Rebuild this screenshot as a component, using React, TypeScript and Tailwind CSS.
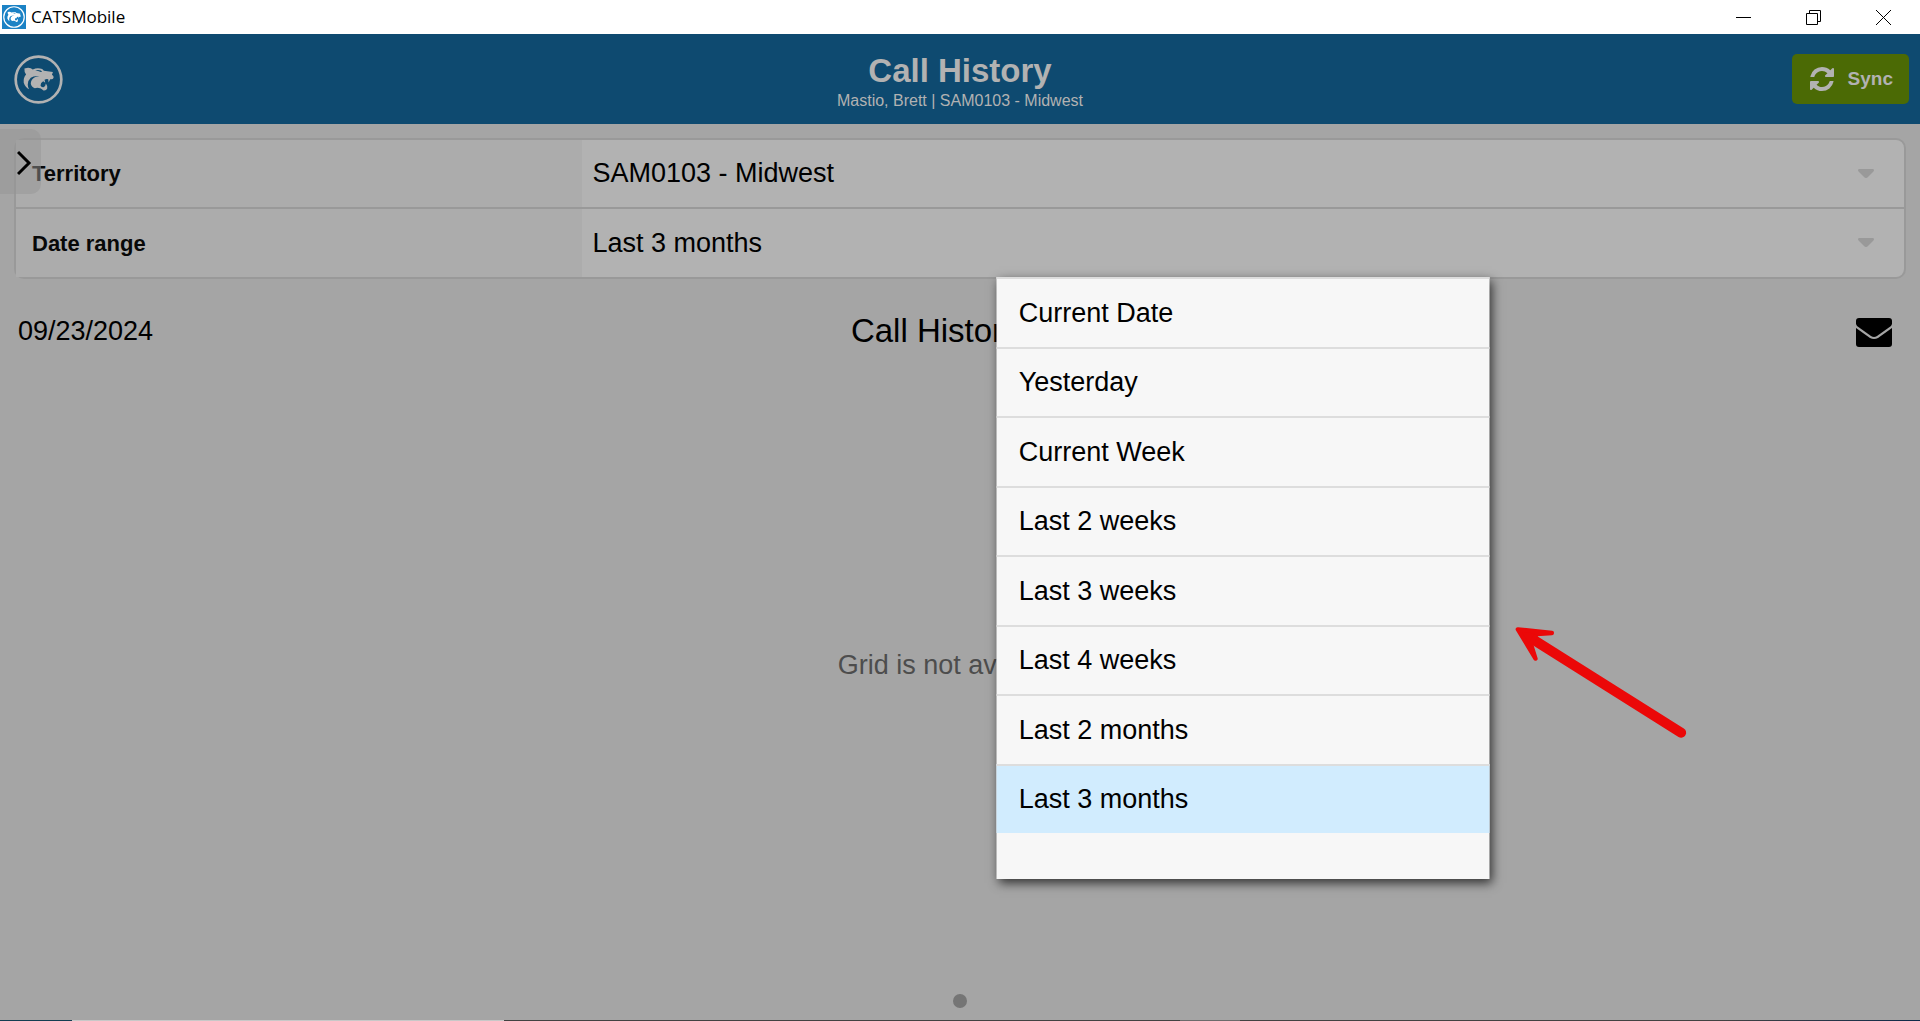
import React, { useState } from 'react';

const TERRITORIES = ['SAM0103 - Midwest'];

const DATE_RANGES = [
  'Current Date',
  'Yesterday',
  'Current Week',
  'Last 2 weeks',
  'Last 3 weeks',
  'Last 4 weeks',
  'Last 2 months',
  'Last 3 months',
];

const CatLogo: React.FC<{ className?: string }> = ({ className }) => (
  <svg className={className} viewBox="42 166 146 146" fill="none" aria-hidden="true">
    <circle cx="115" cy="239" r="68" stroke="currentColor" strokeWidth="8" />
    <path
      fill="currentColor"
      fillRule="evenodd"
      d="M73 206L84 204Q93 204 98 209Q112 203 126 208L131 213L158 217L155 225Q161 228 160 234Q157 240 150 238L145 248L144 238Q138 236 133 240L135 249L129 244Q121 248 121 257Q123 263 130 262Q136 260 137 251Q142 257 141 266Q138 273 130 272L122 266Q112 262 104 265Q94 262 92 252Q92 238 104 232Q110 229 118 229Q101 227 92 234Q83 242 83 254Q83 262 87 268Q76 264 71 249Q69 234 78 224Q72 216 73 206ZM105 212Q113 209 122 212Q128 217 122 217Q114 213 105 212Z"
    />
  </svg>
);

const SyncIcon = () => (
  <svg className="w-6 h-6" viewBox="0 0 1536 1536" fill="currentColor" aria-hidden="true">
    <path d="M1511 928q0 5-1 7-64 268-268 434.5t-478 166.5q-146 0-282.5-55t-243.5-157l-129 129q-19 19-45 19t-45-19-19-45v-448q0-26 19-45t45-19h448q26 0 45 19t19 45-19 45l-137 137q71 66 161 102t187 36q134 0 250-65t186-179q11-17 53-117 8-23 30-23h192q13 0 22.5 9.5t9.5 22.5zm25-800v448q0 26-19 45t-45 19h-448q-26 0-45-19t-19-45 19-45l138-138q-148-137-349-137-134 0-250 65t-186 179q-11 17-53 117-8 23-30 23h-199q-13 0-22.5-9.5t-9.5-22.5v-7q65-268 270-434.5t480-166.5q146 0 284 55.5t245 156.5l130-129q19-19 45-19t45 19 19 45z" />
  </svg>
);

interface SelectRowProps {
  id: string;
  label: string;
  value: string;
  options: string[];
  onChange: (value: string) => void;
  className: string;
  children?: React.ReactNode;
}

const SelectRow: React.FC<SelectRowProps> = ({ id, label, value, options, onChange, className, children }) => (
  <div className={`flex ${className}`}>
    <label htmlFor={id} className="w-[30%] px-4 flex items-center bg-[#acacac] text-[22px] font-bold text-[#080808]">
      {label}
    </label>
    <div className="relative flex-1 flex items-center">
      <select
        id={id}
        value={value}
        onChange={(e) => onChange(e.target.value)}
        className="w-full h-full pl-[10px] pr-16 appearance-none bg-transparent text-[27px] text-black focus:outline-none"
      >
        {options.map(option => <option key={option}>{option}</option>)}
      </select>
      <svg className="absolute right-[30px] w-4 h-[10px] text-[#999999] pointer-events-none" viewBox="0 0 16 10" aria-hidden="true">
        <path fill="currentColor" d="M1 0H15Q17 1 15 3L10 8Q8 10 6 8L1 3Q-1 1 1 0Z" />
      </svg>
      {children}
    </div>
  </div>
);

const App: React.FC = () => {
  const [territory, setTerritory] = useState(TERRITORIES[0]);
  const [range, setRange] = useState('Last 3 months');

  return (
    <div className="min-h-screen flex flex-col bg-[#a5a5a5] font-['Liberation_Sans',Arial,sans-serif] text-black">
      {/* Window title bar */}
      <div className="h-[34px] flex items-center justify-between bg-white pl-[2px]">
        <div className="flex items-center gap-[5px]">
          <span className="w-6 h-6 bg-[#1b82c5] text-white flex items-center justify-center">
            <CatLogo className="w-[22px] h-[22px]" />
          </span>
          <span className="text-[17px] font-['Open_Sans',sans-serif]">CATSMobile</span>
        </div>
        <div className="flex items-center gap-[55px] pr-[29px]">
          <button aria-label="Minimize">
            <svg className="w-[15px] h-[15px]" viewBox="0 0 15 15" stroke="black" fill="none"><path d="M0 7.5H15" /></svg>
          </button>
          <button aria-label="Restore">
            <svg className="w-[15px] h-[15px]" viewBox="0 0 15 15" stroke="black" fill="none"><path d="M.5 3.5H11.5V14.5H.5ZM3.5 3.5V.5H14.5V11.5H11.5" /></svg>
          </button>
          <button aria-label="Close">
            <svg className="w-[15px] h-[15px]" viewBox="0 0 15 15" stroke="black" fill="none"><path d="M0 0L15 15M15 0L0 15" /></svg>
          </button>
        </div>
      </div>

      {/* App header */}
      <header className="h-[90px] grid grid-cols-[1fr_auto_1fr] items-center bg-[#0e4a70] text-[#b2b2b2] px-[11px]">
        <CatLogo className="w-[49px] h-[49px] ml-[3px]" />
        <div className="text-center pt-2">
          <h1 className="text-[33px] leading-9 font-bold">Call History</h1>
          <p className="text-[16px] leading-6">Mastio, Brett | SAM0103 - Midwest</p>
        </div>
        <button className="justify-self-end h-[50px] pl-[18px] pr-4 flex items-center gap-[14px] rounded-[5px] bg-[#4b6a05] text-[19px] font-bold">
          <SyncIcon />
          Sync
        </button>
      </header>

      <main className="relative flex-1 flex flex-col pt-[14px]">
        {/* Filters */}
        <div className="mx-[14px] border-2 border-[#999999] rounded-[10px] bg-[#b2b2b2]">
          <SelectRow
            id="territory"
            label="Territory"
            value={territory}
            options={TERRITORIES}
            onChange={setTerritory}
            className="h-[69px] border-b-2 border-[#999999]"
          />
          <SelectRow
            id="date-range"
            label="Date range"
            value={range}
            options={DATE_RANGES}
            onChange={setRange}
            className="h-[68px]"
          >
            {/* Open picker */}
            <div className="absolute z-10 top-full left-1/2 -translate-x-1/2 w-[493px] pb-[46px] bg-[#f7f7f7] shadow-[2px_4px_10px_rgba(0,0,0,0.7)]">
              <ul role="listbox" aria-label="Date range" className="h-[556px] flex flex-col">
                {DATE_RANGES.map(item => (
                  <li
                    key={item}
                    role="option"
                    aria-selected={item === range}
                    onClick={() => setRange(item)}
                    className={`flex-1 flex items-center px-[22px] border-t-2 border-[#dddddd] text-[27px] cursor-pointer ${item === range ? 'bg-[#d1ecfe]' : ''}`}
                  >
                    {item}
                  </li>
                ))}
              </ul>
              <svg className="absolute left-full top-[348px] ml-6 w-[175px] h-[115px]" viewBox="340 136 525 345" fill="none" stroke="#eb0808" strokeLinecap="round" strokeLinejoin="round" aria-hidden="true">
                <path d="M400 180L843 459" strokeWidth="30" />
                <path d="M353 149L455 160L410 163L392 192L406 237Z" fill="#eb0808" strokeWidth="13" />
              </svg>
            </div>
          </SelectRow>
        </div>

        {/* Side menu handle */}
        <button aria-label="Open menu" className="absolute left-0 top-[5px] w-[41px] h-[65px] rounded-r-[10px] bg-[#969696]/50 flex items-center pl-[17px] pt-[2px]">
          <svg className="w-4 h-[26px]" viewBox="0 0 16 26" fill="none" stroke="black" strokeWidth="3" aria-hidden="true">
            <path d="M1 2L12 13L1 24" />
          </svg>
        </button>

        {/* Report heading */}
        <div className="grid grid-cols-[1fr_auto_1fr] items-center mt-[27px] px-[18px] h-10">
          <span className="text-[27px]">09/23/2024</span>
          <h2 className="text-[33px]">Call History (0)</h2>
          <button aria-label="Email" className="justify-self-end mr-[10px] pt-1">
            <svg className="w-9 h-[29px]" viewBox="0 0 36 29" aria-hidden="true">
              <path d="M3 0H33Q36 0 36 3V6L35 8L21 18Q18 20 15 18L1 8L0 6V3Q0 0 3 0Z" />
              <path d="M0 10L14 20Q18 22 22 20L36 10V26Q36 29 33 29H3Q0 29 0 26Z" />
            </svg>
          </button>
        </div>

        <div className="flex-1 flex items-center justify-center pt-6 text-[27px] text-[#4d4d4d]">Grid is not available.</div>

        {/* Page indicator */}
        <div className="h-[60px] flex items-center justify-center pt-[22px]">
          <span className="w-[14px] h-[14px] rounded-full bg-[#757575]"></span>
        </div>
      </main>

      {/* Top edge of the desktop taskbar */}
      <div className="h-px flex bg-[#424242]">
        <div className="w-[72px] bg-[#143d52]"></div>
        <div className="w-[432px] bg-[#c8c8c8]"></div>
        <div className="flex-1"></div>
        <div className="w-[60px] bg-[#6b6b6b]"></div>
        <div className="w-[480px]"></div>
        <div className="w-[200px] bg-linear-to-r from-[#424242] to-[#0f2a4a]"></div>
      </div>
    </div>
  );
};

export default App;
